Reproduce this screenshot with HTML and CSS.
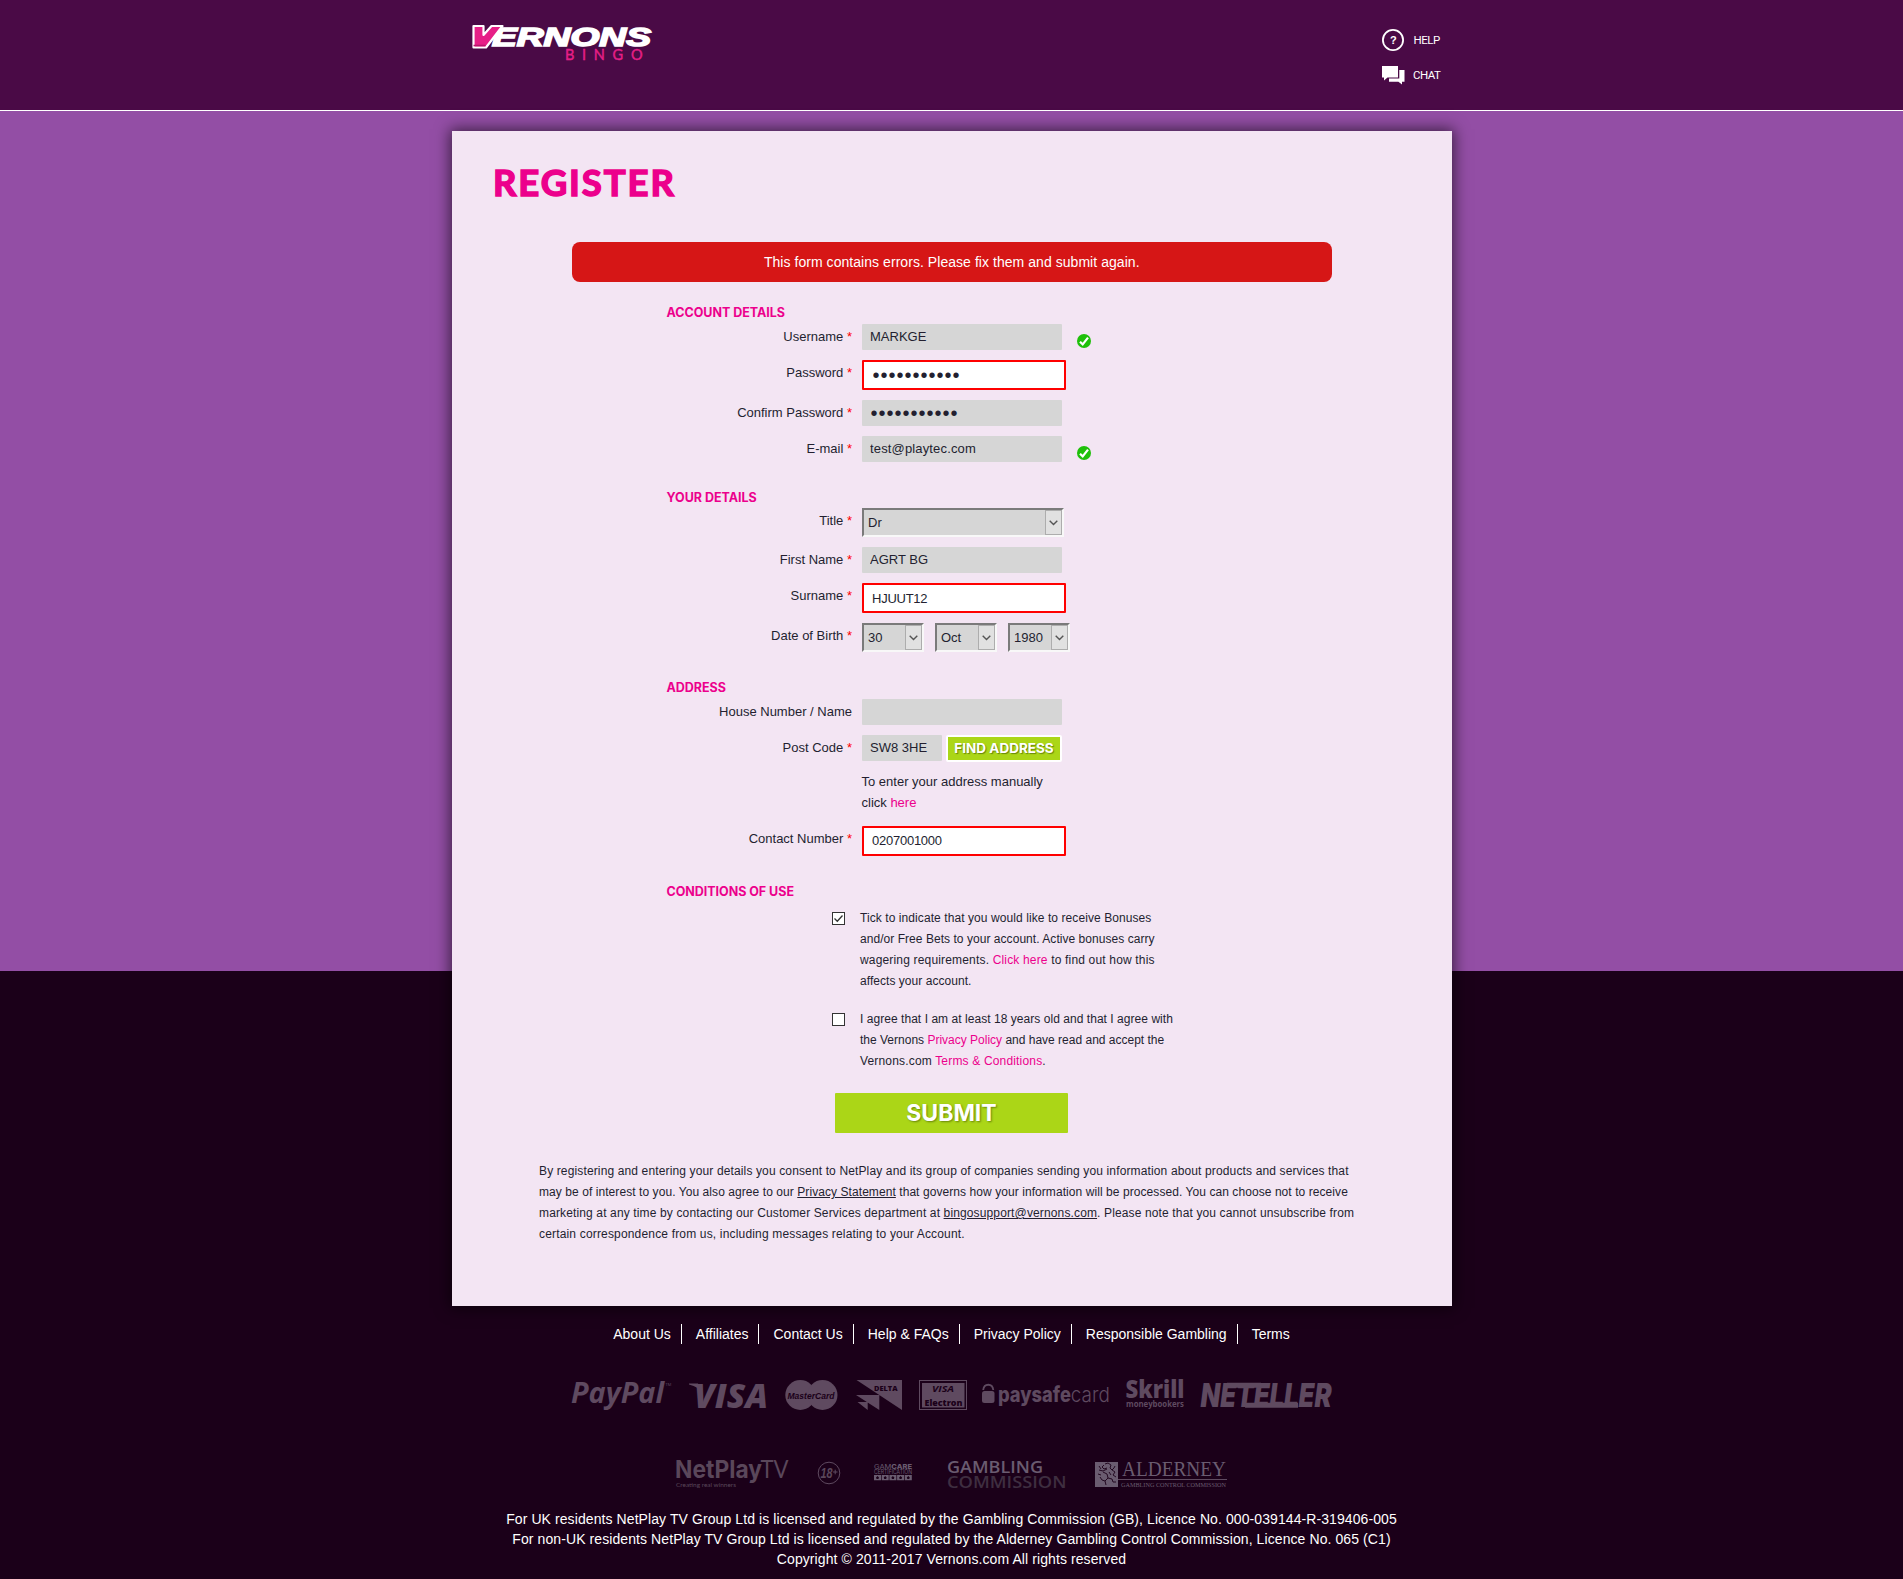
FILE: index.html
```html
<!DOCTYPE html>
<html lang="en">
<head>
<meta charset="utf-8">
<title>Vernons Bingo - Register</title>
<link rel="stylesheet" href="styles.css">
</head>
<body>
<header class="header">
  <div class="header-inner">
    <svg class="brand" width="185" height="42" viewBox="0 0 185 42" role="img" aria-label="Vernons Bingo">
      <text class="brand-name" x="22" y="23.800" textLength="159" lengthAdjust="spacingAndGlyphs">ERNONS</text>
      <path d="M3.500 4h10v9l8-9h11L16 25.500H3.500z" fill="#e61f87" stroke="#fff" stroke-width="2.200" stroke-linejoin="round"/>
      <path d="M3.500 23.500h12" stroke="#b8166c" stroke-width="1.500"/>
      <text class="brand-sub" x="95" y="37.800" textLength="77.500">BINGO</text>
    </svg>
    <nav class="help">
      <a class="help-link" href="#">
        <svg width="24" height="24" viewBox="0 0 24 24"><circle cx="12" cy="12" r="10.100" fill="none" stroke="#fff" stroke-width="1.800"/><text class="help-mark" x="12" y="16.200" text-anchor="middle">?</text></svg>
        <span>HELP</span>
      </a>
      <a class="help-link" href="#">
        <svg width="24" height="24" viewBox="0 0 24 24"><path d="M1 3h16v11.500H6.500L3 17.500v-3H1z" fill="#fff"/><path d="M18.300 7h5.200v11.700h-2.500v2.800l-3.600-2.800H8v-3.200h10.300z" fill="#fff"/></svg>
        <span class="chat">CHAT</span>
      </a>
    </nav>
  </div>
</header>

<main class="card">
  <h1 class="title">REGISTER</h1>
  <div class="alert">This form contains errors. Please fix them and submit again.</div>

  <form class="form">
    <h2 class="section">ACCOUNT DETAILS</h2>
    <div class="row"><label class="label">Username <i>*</i></label><input class="input" value="MARKGE">
      <svg class="tick" width="14" height="14" viewBox="0 0 14 14"><circle cx="7" cy="7" r="7" fill="#1fc00a"/><path d="M3 7.700l2.700 2.700L11 3.600" fill="none" stroke="#fff" stroke-width="2.200"/></svg></div>
    <div class="row"><label class="label">Password <i>*</i></label><input class="input error dots" type="password" value="abcdefghijk"></div>
    <div class="row"><label class="label">Confirm Password <i>*</i></label><input class="input dots" type="password" value="abcdefghijk"></div>
    <div class="row"><label class="label">E-mail <i>*</i></label><input class="input email" value="test@playtec.com">
      <svg class="tick" width="14" height="14" viewBox="0 0 14 14"><circle cx="7" cy="7" r="7" fill="#1fc00a"/><path d="M3 7.700l2.700 2.700L11 3.600" fill="none" stroke="#fff" stroke-width="2.200"/></svg></div>

    <h2 class="section tight">YOUR DETAILS</h2>
    <div class="row"><label class="label">Title <i>*</i></label>
      <div class="select wide"><span>Dr</span><b><svg width="9" height="6" viewBox="0 0 9 6"><path d="M.700.700l3.800 3.800L8.300.700"/></svg></b></div></div>
    <div class="row"><label class="label">First Name <i>*</i></label><input class="input" value="AGRT BG"></div>
    <div class="row"><label class="label">Surname <i>*</i></label><input class="input error narrow" value="HJUUT12"></div>
    <div class="row"><label class="label">Date of Birth <i>*</i></label>
      <div class="dates">
        <div class="select"><span>30</span><b><svg width="9" height="6" viewBox="0 0 9 6"><path d="M.700.700l3.800 3.800L8.300.700"/></svg></b></div>
        <div class="select"><span>Oct</span><b><svg width="9" height="6" viewBox="0 0 9 6"><path d="M.700.700l3.800 3.800L8.300.700"/></svg></b></div>
        <div class="select"><span>1980</span><b><svg width="9" height="6" viewBox="0 0 9 6"><path d="M.700.700l3.800 3.800L8.300.700"/></svg></b></div>
      </div></div>

    <h2 class="section">ADDRESS</h2>
    <div class="row"><label class="label">House Number / Name</label><input class="input"></div>
    <div class="row"><label class="label">Post Code <i>*</i></label>
      <div class="finder"><input class="input short" value="SW8 3HE"><button class="find" type="button">FIND ADDRESS</button></div></div>
    <p class="manual">To enter your address manually<br>click <a href="#">here</a></p>
    <div class="row"><label class="label">Contact Number <i>*</i></label><input class="input error narrow phone" value="0207001000"></div>

    <h2 class="section">CONDITIONS OF USE</h2>
    <div class="terms">
      <div class="term">
        <svg class="box" width="13" height="13" viewBox="0 0 13 13"><rect x=".5" y=".5" width="12" height="12" fill="#fff" stroke="#333"/><path d="M2.500 6.500l2.800 2.800 5.200-5.800" fill="none" stroke="#333" stroke-width="1.300"/></svg>
        <p class="copy"><span class="s2">Tick to indicate that you would like to receive Bonuses</span><span class="s1">and/or Free Bets to your account. Active bonuses carry</span><span class="s3">wagering requirements. <a href="#">Click here</a> to find out how this</span><span class="s1">affects your account.</span></p>
      </div>
      <div class="term">
        <svg class="box" width="13" height="13" viewBox="0 0 13 13"><rect x=".5" y=".5" width="12" height="12" fill="#fff" stroke="#333"/></svg>
        <p class="copy"><span class="s1">I agree that I am at least 18 years old and that I agree with</span><span>the Vernons <a href="#">Privacy Policy</a> and have read and accept the</span><span class="s3">Vernons.com <a href="#">Terms &amp; Conditions</a>.</span></p>
      </div>
    </div>
    <button class="submit" type="button">SUBMIT</button>
  </form>

  <p class="copy consent"><span class="s2 wider">By registering and entering your details you consent to NetPlay and its group of companies sending you information about products and services that</span><span class="s1 wider">may be of interest to you. You also agree to our <a href="#">Privacy Statement</a> that governs how your information will be processed. You can choose not to receive</span><span class="s2 wider">marketing at any time by contacting our Customer Services department at <a href="#">bingosupport@vernons.com</a>. Please note that you cannot unsubscribe from</span><span class="s3">certain correspondence from us, including messages relating to your Account.</span></p>
</main>

<footer class="footer">
  <ul class="links">
    <li>About Us</li><li>Affiliates</li><li>Contact Us</li><li>Help &amp; FAQs</li><li>Privacy Policy</li><li>Responsible Gambling</li><li>Terms</li>
  </ul>

  <div class="logos pay">
    <svg width="101" height="34" viewBox="0 0 101 34"><text class="os bi" x="0" y="25" font-size="28.500" textLength="93" lengthAdjust="spacingAndGlyphs">PayPal</text><text class="os" x="94.500" y="8" font-size="4">TM</text></svg>
    <svg width="84" height="34" viewBox="0 0 84 34"><path d="M3 5.500h9l5 11q-4-8-14-10z"/><text class="os bi heavy" x="8" y="29.500" font-size="33" textLength="74" lengthAdjust="spacingAndGlyphs">VISA</text></svg>
    <svg width="56" height="34" viewBox="0 0 56 34"><circle cx="16.300" cy="17" r="15"/><circle cx="38.500" cy="17" r="15"/><text class="sans bi cut" x="3.500" y="20.500" font-size="9.500" textLength="47" lengthAdjust="spacingAndGlyphs">MasterCard</text></svg>
    <svg width="50" height="34" viewBox="0 0 50 34"><path d="M2.500 2H48v30zM2 17h23.300v15zM3.500 24h10.200v8z"/><text class="os cut black" x="20" y="13" font-size="7" textLength="23.500" lengthAdjust="spacingAndGlyphs">DELTA</text></svg>
    <svg width="50" height="34" viewBox="0 0 50 34"><rect x="1.500" y="2.500" width="47" height="29" class="line"/><rect x="4" y="5" width="42.500" height="24.500"/><text class="os bi cut" x="14" y="13.500" font-size="9" textLength="22" lengthAdjust="spacingAndGlyphs">VISA</text><text class="os cut black" x="6.500" y="27.500" font-size="8.500" textLength="38" lengthAdjust="spacingAndGlyphs">Electron</text></svg>
    <svg width="128" height="34" viewBox="0 0 128 34"><rect y="13" width="12.500" height="12" rx="2.500"/><path class="line thick" d="M1.200 12C2 5 10.500 5 11.300 12"/><text class="mont black" x="16" y="24" font-size="20.500" textLength="73" lengthAdjust="spacingAndGlyphs">paysafe</text><text class="mont thin" x="88.800" y="24" font-size="20.500" textLength="39" lengthAdjust="spacingAndGlyphs">card</text></svg>
    <svg width="61" height="34" viewBox="0 0 61 34"><text class="os black" x="1.500" y="19.500" font-size="24" textLength="59" lengthAdjust="spacingAndGlyphs">Skrill</text><text class="os b" x="2" y="29" font-size="8.500" textLength="58" lengthAdjust="spacingAndGlyphs">moneybookers</text></svg>
    <svg width="134" height="34" viewBox="0 0 134 34"><text class="neteller" x="1.500" y="29" font-size="33" textLength="131" lengthAdjust="spacingAndGlyphs">NETELLER</text><path d="M28 4.800h34v5H27zM47 24.800h52v5H46z"/></svg>
  </div>

  <div class="logos partners">
    <svg width="113" height="34" viewBox="0 0 113 34"><text class="mont b" x="-1" y="20.500" font-size="24.500" textLength="87" lengthAdjust="spacingAndGlyphs">NetPlay</text><text class="lato" x="84.500" y="20.500" font-size="25.500" textLength="28" lengthAdjust="spacingAndGlyphs">TV</text><text class="lato" x="0" y="29.500" font-size="6.500" textLength="60" lengthAdjust="spacingAndGlyphs">Creating real winners</text></svg>
    <svg width="24" height="34" viewBox="0 0 24 34"><circle cx="12" cy="16" r="10.800" class="line"/><text class="sans bi" x="3.500" y="21" font-size="14" textLength="12" lengthAdjust="spacingAndGlyphs">18</text><path class="line" d="M16 15h4.500M18.200 12.700v4.600"/></svg>
    <svg class="bright" width="48" height="34" viewBox="0 0 48 34"><text class="mont" x="5" y="11.500" font-size="6.500" textLength="38" lengthAdjust="spacingAndGlyphs">GAM<tspan class="black">CARE</tspan></text><text class="mont" x="5" y="16.500" font-size="5.500" textLength="38" lengthAdjust="spacingAndGlyphs">CERTIFICATION</text><path d="M5 18h7v5.200h-7zM12.700 18h7v5.200h-7zM20.400 18h7v5.200h-7zM28.100 18h7v5.200h-7zM35.800 18h7v5.200h-7z"/><path class="cut" d="M8.500 19l1.500 1.400-.6 1.600H7.600L7 20.400zM16.200 19l1.500 1.400-.6 1.600h-1.800l-.6-1.600zM23.900 19l1.500 1.400-.6 1.600H23l-.6-1.600zM31.600 19l1.500 1.400-.6 1.600h-1.800l-.6-1.600zM39.300 19l1.500 1.400-.6 1.600h-1.800l-.6-1.600z"/></svg>
    <svg width="122" height="34" viewBox="0 0 122 34"><text class="os semi bright" x="2" y="15.500" font-size="17" textLength="96" lengthAdjust="spacingAndGlyphs">GAMBLING</text><text class="os semi dim" x="2" y="31" font-size="17" textLength="119.500" lengthAdjust="spacingAndGlyphs">COMMISSION</text></svg>
    <svg class="bright" width="132" height="34" viewBox="0 0 132 34"><rect y="5" width="23" height="25"/><path class="lion" d="M10 7l3-1 3 2-1 3 2 2 2-2 1-2M9 8l-2 2 2 2 3-1M4 9l2 3M12 12l-4 2-4-1M8 15l4 2 1 4-3 3-3-1M7 23l-2-3M13 21l4 1 1 3h3M17 13l3 2-2 3 3 2M10 24l1 4M3 17l3 1M14 15l2 3"/><text class="serif" x="27" y="19" font-size="20" textLength="104" lengthAdjust="spacingAndGlyphs">ALDERNEY</text><path class="line" d="M23 22.500h109"/><text class="serif" x="26" y="30" font-size="7" textLength="105" lengthAdjust="spacingAndGlyphs">GAMBLING CONTROL COMMISSION</text></svg>
  </div>

  <p class="legal">For UK residents NetPlay TV Group Ltd is licensed and regulated by the Gambling Commission (GB), Licence No. 000-039144-R-319406-005<br>For non-UK residents NetPlay TV Group Ltd is licensed and regulated by the Alderney Gambling Control Commission, Licence No. 065 (C1)<br>Copyright © 2011-2017 Vernons.com All rights reserved</p>
</footer>
</body>
</html>
```
FILE: styles.css
```css
* { box-sizing: border-box; }
body {
  margin: 0;
  min-height: 1579px;
  background: linear-gradient(#934ea5 971px, #1b0019 971px);
  font: 13px/21px "Liberation Sans", Arial, sans-serif;
  color: #231f30;
}
h1, h2, p, ul { margin: 0; padding: 0; }
a { color: #ec008c; text-decoration: none; }

.header { height: 111px; background: #4a0a46; border-bottom: 1px solid #fff; }
.header-inner {
  width: 1000px; margin: 0 auto; padding: 22px 11px 0 18.500px;
  display: flex; justify-content: space-between; align-items: flex-start;
}
.brand-name { font: italic bold 25.500px "Liberation Sans", Arial, sans-serif; fill: #fff; stroke: #fff; stroke-width: 1.600px; }
.brand-sub { font: 14.500px Lato, sans-serif; fill: #e61f87; stroke: #e61f87; stroke-width: .4px; }
.help { display: flex; flex-direction: column; gap: 11px; padding-top: 6px; width: 60px; }
.help-link { display: flex; align-items: center; gap: 9px; height: 24px; color: #fff; font: 11.500px/24px Roboto, sans-serif; letter-spacing: -.5px; }
.help-link svg { flex: none; }
.help-link .chat { margin-left: -.5px; }
.help-mark { font: bold 11px "Liberation Sans", sans-serif; fill: #fff; }

.card {
  width: 1000px; height: 1175px; margin: 20px auto 0; padding-left: .5px; background: #f3e5f3;
  box-shadow: 0 0 14px 2px rgba(0, 0, 0, .6);
}
.title {
  padding: 30px 0 0 41px; font: bold 36.500px/42px Lato, sans-serif; color: #ec008c;
  -webkit-text-stroke: 1.500px #ec008c; stroke-linejoin: round; letter-spacing: 1.900px;
}
.alert {
  width: 760px; height: 40px; margin: 39px auto 0; border-radius: 8px; background: #d61616;
  color: #fff; font-size: 14px; line-height: 40px; text-align: center; letter-spacing: .05px;
}
.form { padding-top: 23px; display: flex; flex-direction: column; }
.section {
  margin: 28px 0 3px 214.500px; height: 16px; font: 700 12.500px/16px Inter, sans-serif; color: #ec008c; letter-spacing: -.03px;
}
.form .section:first-child { margin-top: 0; }
.section.tight { margin-bottom: 2px; }
.row { display: flex; gap: 10px; margin-bottom: 10px; align-items: flex-start; }
.row:has(+ .section) { margin-bottom: 0; }
.label { width: 400px; padding-top: 2px; text-align: right; }
.label i { font-style: normal; color: #f00; }
.input {
  width: 200px; height: 26px; border: 0; border-radius: 1px; background: #d6d6d6; padding: 0 8px 2px;
  font: 13px "Liberation Sans", Arial, sans-serif; color: #231f30; outline: 0;
}
.input.error { width: 204px; height: 30px; border: 2px solid #f00; background: #fff; padding-bottom: 0; }
.input.dots { font-size: 20px; letter-spacing: 1px; padding: 1px 8px 0 8.500px; }
.input.short { width: 80px; }
.input.email { letter-spacing: .15px; }
.input.narrow { letter-spacing: -.25px; }
.input.phone { padding-bottom: 1px; }
.tick { margin: 10px 0 0 5px; }
.select {
  width: 62px; height: 29px; display: flex; justify-content: space-between; background: #d6d6d6;
  border: 2px solid; border-color: #7a7a7a #f8f8f8 #f8f8f8 #7a7a7a; padding-left: 4px;
  line-height: 24px;
}
.select.wide { width: 202px; }
.select span { padding-top: 1px; }
.select b { width: 17px; height: 25px; background: #e1e1e1; border: 1px solid #adadad; display: flex; align-items: center; justify-content: center; }
.select path { fill: none; stroke: #555; stroke-width: 1.400; }
.dates { display: flex; gap: 11px; }
.finder { display: flex; gap: 4px; height: 26px; }
.find {
  width: 116px; height: 27px; border: 2px solid #fff; border-radius: 2px; background: #abd617; padding: 0 0 2px;
  font: 700 13.500px Inter, sans-serif; color: #fff; text-shadow: 1px 1px 1px rgba(60, 80, 0, .6); white-space: nowrap;
}
.manual { margin: 0 0 13px 409.500px; }
.terms { margin: 5px 0 0 380px; display: flex; flex-direction: column; gap: 17px; }
.term { display: flex; gap: 15px; }
.box { margin-top: 4px; }
.copy { font-size: 12px; white-space: nowrap; }
.copy span { display: block; }
.s1 { letter-spacing: .045px; }
.s2 { letter-spacing: .08px; }
.s3 { letter-spacing: .17px; }
.s1.wider { letter-spacing: .07px; }
.s2.wider { letter-spacing: .135px; }
.submit {
  width: 233px; height: 40px; margin: 21px 0 0 383px; border: 0; border-radius: 1px; background: #abd617; padding: 0;
  font: 700 23px Inter, sans-serif; color: #fff; text-shadow: 1px 1px 2px rgba(60, 80, 0, .6);
}
.consent { margin: 28px 0 0 87px; }
.consent a { color: inherit; text-decoration: underline; }

.footer { padding-top: 18px; color: #fff; font-size: 14px; line-height: 20px; }
.links { display: flex; justify-content: center; list-style: none; }
.links li { height: 20px; padding: 0 10px 0 14px; border-right: 1px solid #fff; }
.links li:first-child { padding-left: 0; }
.links li:last-child { padding-right: 0; border: 0; }
.logos { display: flex; justify-content: center; fill: #5f4a60; }
.logos svg { overflow: visible; }
.pay { gap: 14px; margin-top: 34px; }
.partners { gap: 28px; margin-top: 45px; fill: #5a475a; }
.os { font-family: "Open Sans", sans-serif; }
.sans { font-family: "Liberation Sans", sans-serif; }
.mont { font-family: Inter, sans-serif; }
.lato { font-family: Lato, sans-serif; }
.serif { font-family: "Liberation Serif", serif; }
.b { font-weight: bold; }
.semi { font-weight: 600; }
.bi { font-weight: bold; font-style: italic; }
.heavy { font-weight: 800; }
.black { font-weight: 800; }
.thin { font-weight: 300; }
.bright { fill: #6a5c70; }
.cut { fill: #1b0019; }
.dim { fill: #3e2e40; }
.line { fill: none; stroke: #5f4a60; }
.thick { stroke-width: 1.800; }
.lion { fill: none; stroke: #1b0019; stroke-width: .9; }
.neteller { font: italic 900 33px Inter, sans-serif; }
.legal { margin-top: 18px; text-align: center; white-space: nowrap; letter-spacing: .088px; }
```
